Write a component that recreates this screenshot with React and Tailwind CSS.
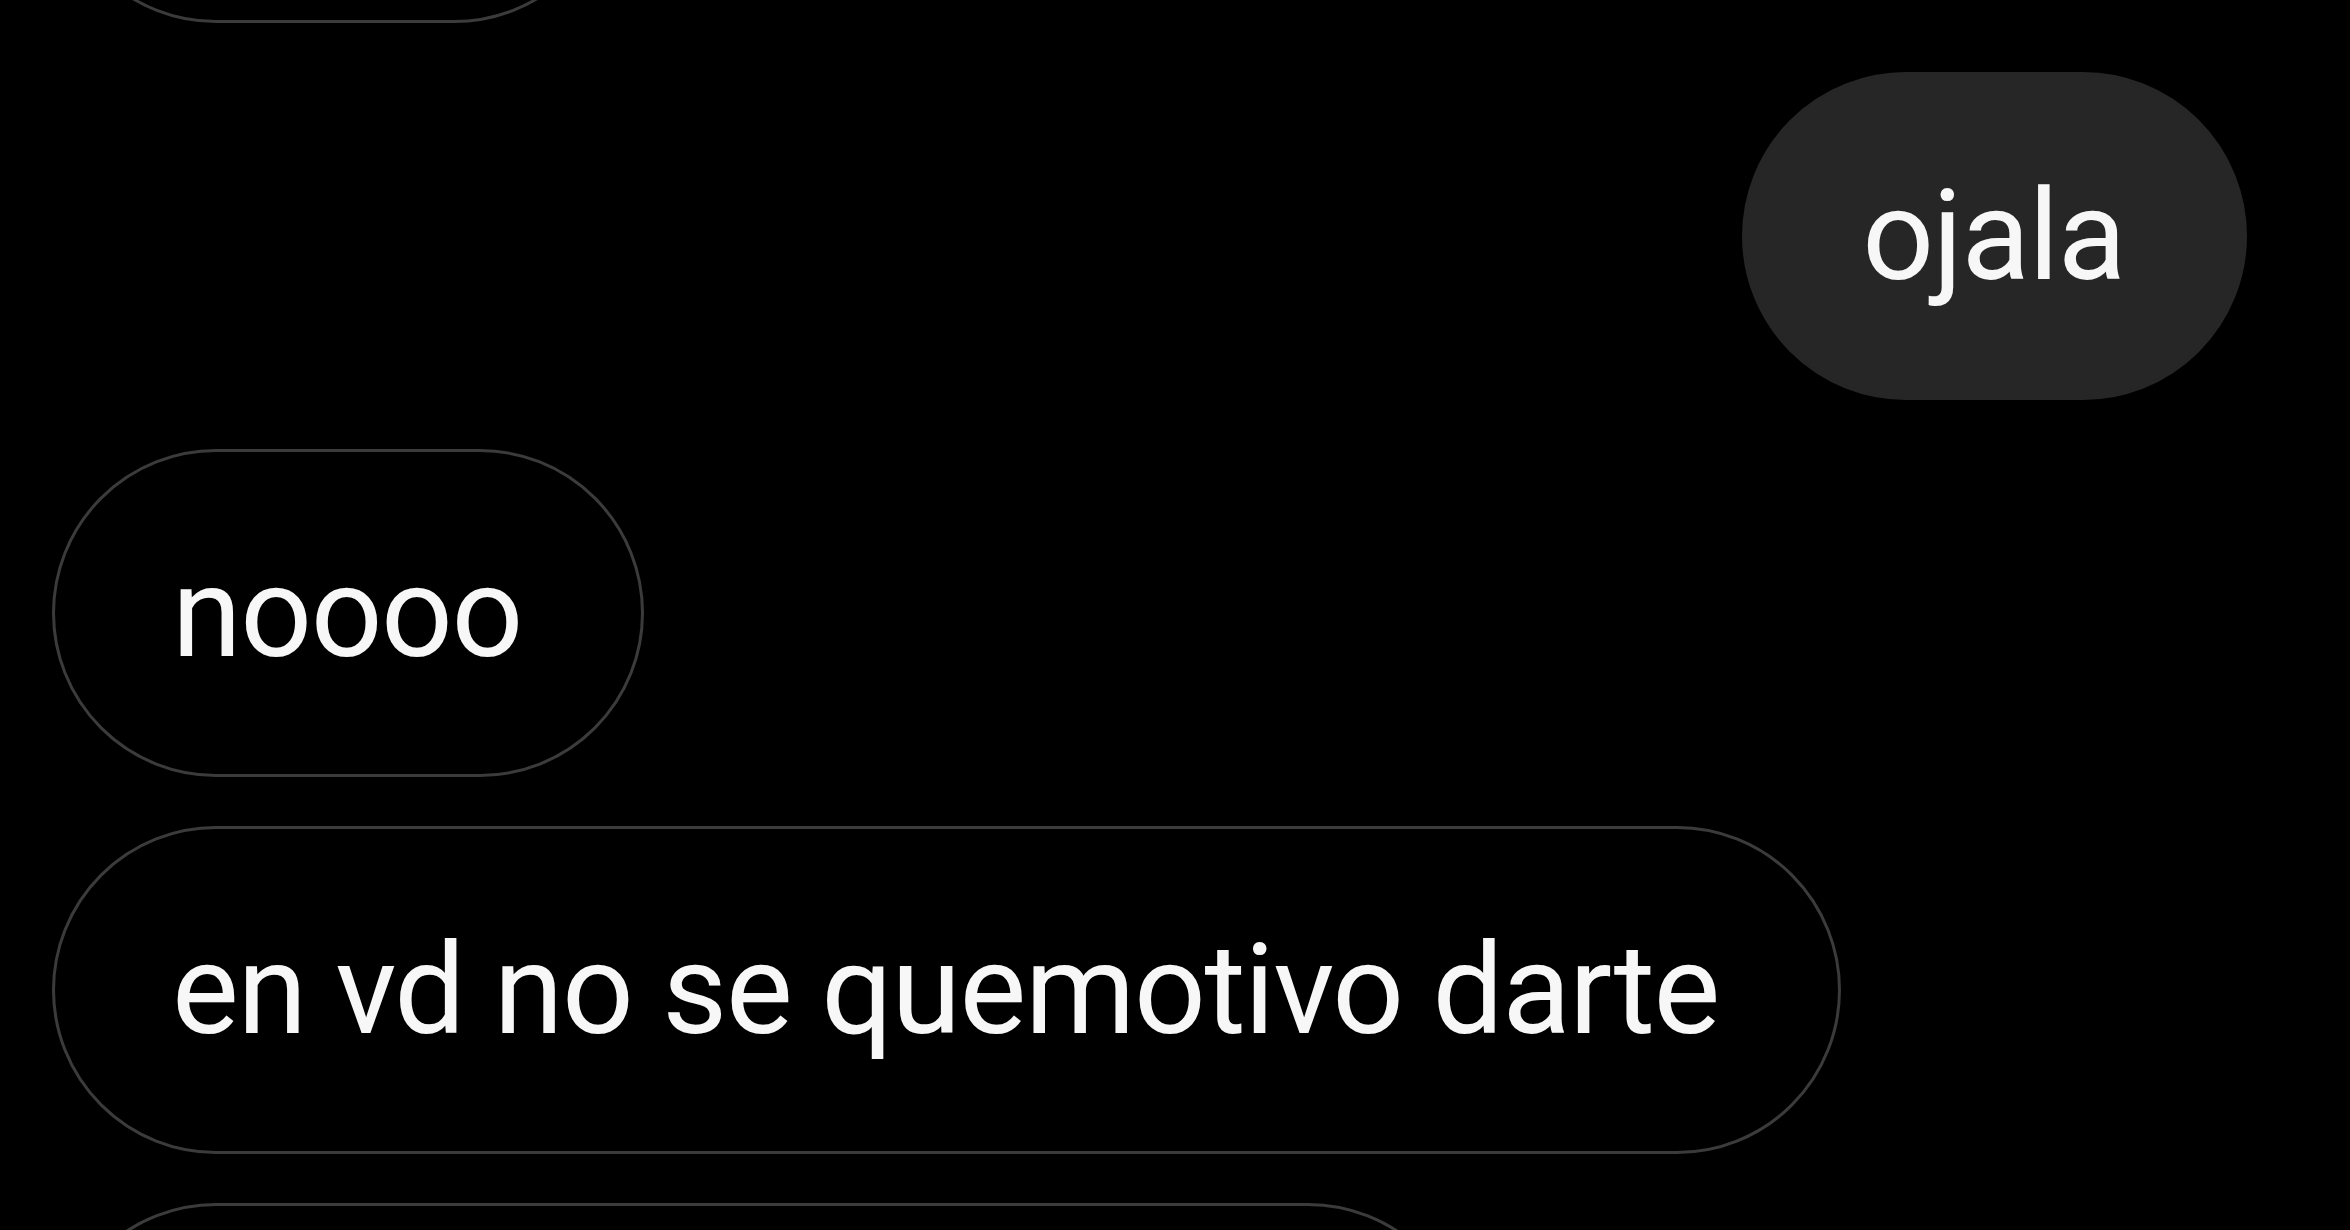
import React from 'react';

const messages = [
  { id: 'ojala', text: 'ojala', mine: true },
  { id: 'noooo', text: 'noooo', mine: false },
  { id: 'envd', text: 'en vd no se quemotivo darte', mine: false },
];

const Bubble = ({ text, mine }) => (
  <div
    className={
      mine
        ? 'self-end h-[328px] flex items-center pl-[117px] pr-[119px] rounded-full border-[3px] border-[#262626] bg-[#262626]'
        : 'self-start h-[328px] flex items-center pl-[117px] pr-[119px] rounded-full border-[3px] border-[#3b3b3b] bg-black'
    }
  >
    <span className="text-[126px] leading-[148px] tracking-[-1.4px] text-[#f7f7f7] whitespace-nowrap">
      {text}
    </span>
  </div>
);

const App = () => {
  return (
    <div
      className="w-[2350px] h-[1230px] overflow-hidden bg-black"
      style={{ fontFamily: 'Roboto, "Noto Sans", sans-serif' }}
    >
      <div className="flex flex-col gap-[49px] pl-[52px] pr-[103px] -mt-[305px]">
        {/* previous message, mostly scrolled off the top */}
        <div className="self-start w-[566px] h-[328px] rounded-full border-[3px] border-[#3b3b3b]" />

        {messages.map((m) => (
          <Bubble key={m.id} text={m.text} mine={m.mine} />
        ))}

        {/* next message, cut off at the bottom */}
        <div className="self-start w-[1420px] h-[328px] rounded-full border-[3px] border-[#3b3b3b]" />
      </div>
    </div>
  );
};

export default App;
